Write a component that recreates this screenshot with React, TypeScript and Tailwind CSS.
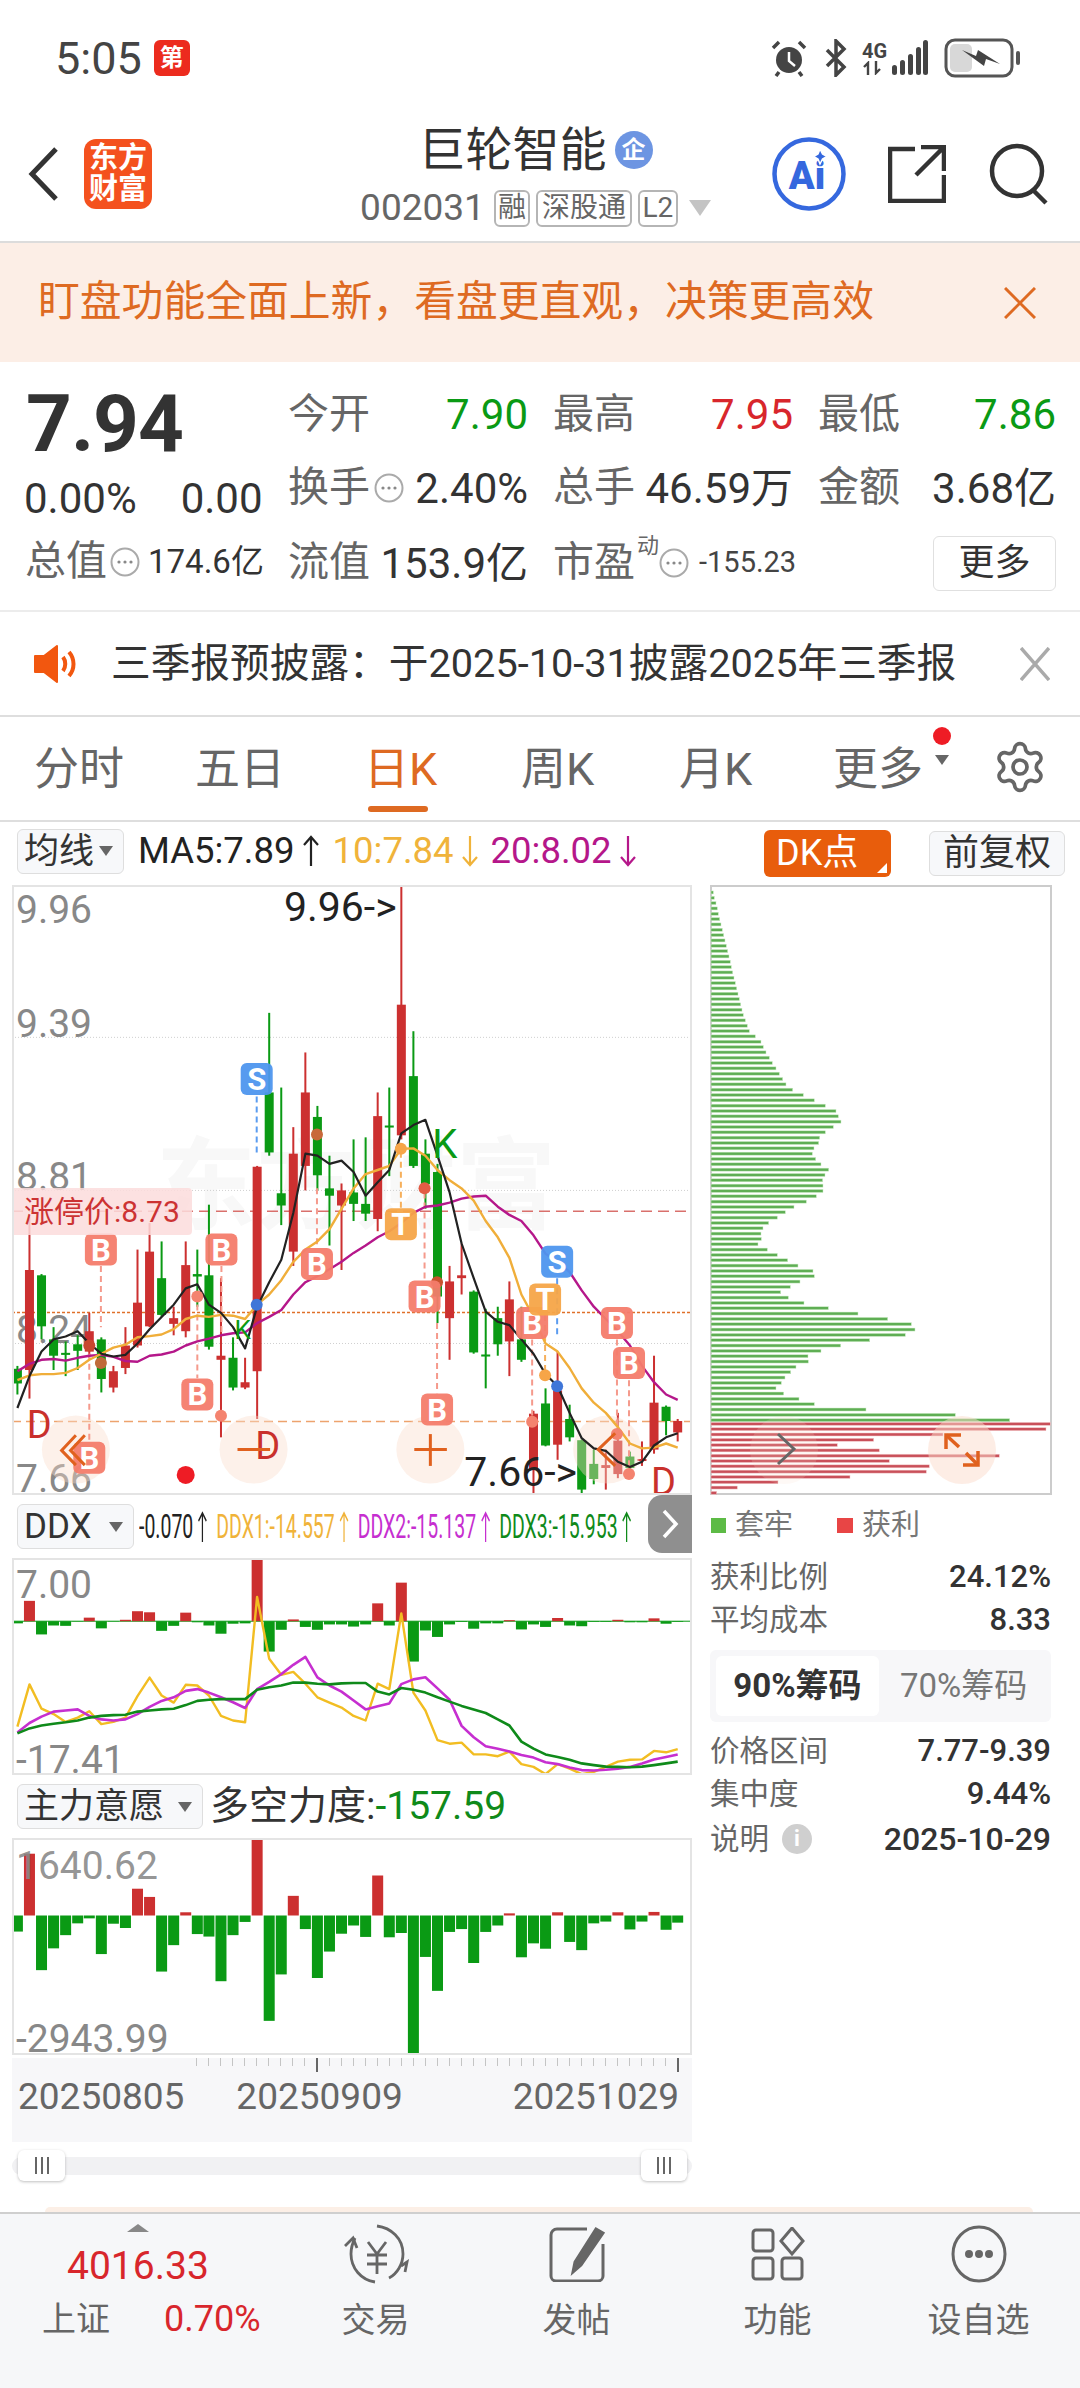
import React from "react";
import { Settings } from "lucide-react";

const RED = "#cc3030";
const GREEN = "#0a9a14";
const XS = [39,66,93,120,147,174,200,227,254,281,308,335,362,389,416,442,468,495,522,549,576,603,630,657,684,711,738,765,792,819,846,872,899,926,953,980,1007,1034,1061,1088,1115,1141,1168,1195,1222,1249,1276,1303,1330,1357,1384,1411,1438,1465,1492,1518];
const X = (z: number) => z / 2.24 - 12;
const Y = (z: number) => z / 2.45 - 15;

// up/down, high, body top, body bottom, low
const K: [number, number, number, number, number][] = [
[0,1215,1222,1258,1285],[1,850,980,1225,1295],[0,990,993,1118,1150],[0,1120,1150,1190,1225],[0,1155,1183,1188,1240],[0,1140,1162,1178,1225],[1,1085,1130,1180,1195],[0,1145,1150,1247,1280],[1,1215,1228,1268,1280],[1,1120,1165,1220,1235],[1,930,1060,1165,1170],[1,865,935,1118,1120],[0,910,1000,1090,1095],[1,1070,1098,1112,1140],[1,910,968,1130,1145],[0,930,990,996,1070],[0,820,993,1168,1175],[1,1000,1190,1200,1390],[0,1145,1195,1268,1275],[1,1195,1255,1268,1272],[1,725,727,1228,1345],[0,350,545,692,700],[0,533,792,822,870],[1,630,695,935,970],[1,447,545,725,785],[0,578,605,748,785],[0,700,780,798,920],[1,768,785,822,980],[0,660,790,818,860],[0,655,818,842,860],[1,545,603,855,885],[0,533,626,631,750],[1,37,330,650,660],[0,395,505,725,730],[0,660,695,770,830],[0,720,740,1045,1110],[1,970,1008,1098,1200],[1,915,993,1000,1040],[0,1030,1033,1182,1185],[0,1075,1187,1192,1270],[0,1070,1098,1162,1190],[1,1008,1052,1155,1240],[0,1070,1150,1200,1205],[1,1325,1332,1468,1530],[0,1270,1307,1410,1412],[1,1180,1275,1408,1445],[0,1310,1345,1390,1400],[0,1395,1397,1518,1530],[0,1420,1455,1492,1505],[1,1420,1458,1465,1518],[1,1330,1398,1480,1490],[0,1425,1437,1465,1490],[1,1400,1443,1448,1460],[1,1190,1305,1420,1430],[0,1312,1315,1350,1385],[1,1345,1350,1378,1400]];

const pts = (ys: number[], fy: (n: number) => number, xs: number[] = XS) => ys.map((y, i) => `${X(xs[i]).toFixed(1)},${fy(y).toFixed(1)}`).join(" ");
const MA5 = [1318,1240,1180,1150,1143,1130,1160,1185,1192,1188,1160,1125,1095,1065,1025,1015,1065,1085,1120,1172,1070,1010,955,840,695,700,720,712,740,798,765,735,645,625,612,700,790,915,1000,1082,1107,1115,1150,1185,1235,1265,1330,1392,1417,1423,1450,1463,1450,1410,1390,1380];
const MA10 = [1250,1238,1235,1235,1232,1220,1200,1185,1170,1163,1145,1142,1138,1125,1100,1092,1095,1090,1092,1100,1065,1040,1005,960,930,910,880,830,780,745,735,725,683,682,700,735,760,780,810,860,900,950,1040,1095,1160,1180,1220,1270,1305,1330,1365,1405,1417,1415,1405,1415];
const MA20 = [1228,1210,1200,1198,1202,1195,1190,1188,1193,1203,1205,1190,1187,1180,1165,1155,1148,1140,1135,1133,1110,1095,1078,1040,1010,995,978,960,938,920,900,885,865,840,825,822,815,805,800,798,825,845,860,895,940,960,985,1030,1070,1100,1130,1165,1215,1255,1285,1298];

const CHIP: number[] = [69,72,77,81,84,88,92,96,100,104,108,112,116,120,123,127,131,135,139,143,147,151,155,159,165,171,177,195,212,219,227,237,246,257,267,277,287,307,339,372,405,437,444,452,429,405,388,385,371,366,376,392,415,404,397,398,398,378,348,311,285,261,235,218,212,213,203,231,261,292,323,368,372,329,300,271,294,341,414,503,592,663,674,645,538,451,392,353,354,317,301,284,273,257,280,326,372,527,795,958];
const CHIPR: number[] = [1080,1067,758,550,441,567,927,597,717,708,479,263,141,79];

const DDXB = [346,283,377,352,353,341,330,360,341,336,312,315,367,353,316,343,352,375,347,346,165,425,364,335,356,364,349,349,355,349,290,352,232,453,366,384,349,342,361,346,346,337,363,349,356,331,352,354,342,342,336,343,343,332,347,342];
const DY = [635,517,585,600,622,610,592,628,622,610,550,498,548,568,518,520,548,605,618,623,272,445,490,482,515,553,568,582,605,618,515,530,318,540,590,673,683,680,713,713,718,705,740,748,768,740,753,768,762,748,733,728,727,703,707,698];
const DM = [652,625,607,593,590,587,605,615,618,615,600,580,563,553,535,530,540,553,567,583,530,510,488,462,440,497,520,537,562,587,578,570,516,503,497,528,560,633,665,690,697,705,715,722,735,740,750,757,758,756,753,748,738,727,720,713];
const DG = [654,640,632,627,623,618,610,605,603,602,593,590,587,585,575,563,560,558,558,558,532,525,520,512,512,515,517,514,513,513,537,545,527,532,540,553,565,577,587,597,615,632,677,697,713,720,728,738,743,747,748,749,747,743,738,733];
const MAIN = [1210,992,1318,1257,1220,1187,1173,1273,1188,1200,1090,1113,1322,1248,1156,1217,1224,1349,1220,1183,950,1460,1330,1110,1203,1340,1266,1216,1193,1225,1053,1226,1214,1552,1281,1376,1211,1203,1298,1211,1193,1159,1282,1243,1258,1156,1239,1262,1187,1182,1156,1204,1182,1155,1205,1185];

function Marker({ x, y, t }: { x: number; y: number; t: string }) {
  const fill = t === "B" ? "#f47c6b" : t === "S" ? "#4e96ee" : "#f6a548";
  const cx = X(x), cy = Y(y);
  return (
    <g>
      <rect x={cx - 16} y={cy - 16} width={32} height={32} rx={6} fill={fill} opacity={0.95} />
      <text x={cx} y={cy + 11} textAnchor="middle" fontSize={31} fontWeight={700} fill="#fff">{t}</text>
    </g>
  );
}

function VDash({ x, a, b, c }: { x: number; a: number; b: number; c: string }) {
  return <line x1={X(x)} x2={X(x)} y1={Y(a)} y2={Y(b)} stroke={c} strokeWidth={2} strokeDasharray="6 4" />;
}

function Main() {
  const grid = [410, 785, 1160];
  return (
    <div className="relative w-[680px] h-[610px] border-2 border-[#e4e4e4] overflow-hidden">
      <div className="absolute left-[142px] top-[250px] text-[100px] leading-[100px] font-bold text-[#f8f8f8] whitespace-nowrap">东方财富</div>
      <svg width={680} height={610} className="absolute -left-[2px] -top-[2px]">
        {grid.map((g) => <line key={g} x1={0} x2={680} y1={Y(g)} y2={Y(g)} stroke="#cfcfcf" strokeWidth={1} strokeDasharray="1 2" />)}
        {([["9.96",38],["9.39",152],["8.81",305],["8.24",458],["7.66",607]] as [string, number][]).map(([t, y]) => (
          <text key={t} x={4} y={y} fontSize={39} fill="#888">{t}</text>
        ))}
        <line x1={0} x2={680} y1={Y(836)} y2={Y(836)} stroke="#d9706c" strokeWidth={1.5} strokeDasharray="11 6" />
        <line x1={0} x2={680} y1={Y(1084)} y2={Y(1084)} stroke="#e0702a" strokeWidth={1.5} strokeDasharray="3 2" />
        <line x1={0} x2={680} y1={Y(1351)} y2={Y(1351)} stroke="#eda36e" strokeWidth={1.5} strokeDasharray="9 5" />
        {K.map(([u, h, t, b, l], i) => {
          const c = u ? RED : GREEN;
          return (
            <g key={i}>
              <rect x={X(XS[i]) - 1} y={Y(h)} width={2} height={(l - h) / 2.45} fill={c} />
              <rect x={X(XS[i]) - 4.5} y={Y(t)} width={9} height={Math.max((b - t) / 2.45, 2)} fill={c} />
            </g>
          );
        })}
        {[170, 568, 964, 1360].map((c) => <circle key={c} cx={X(c)} cy={Y(1420)} r={34} fill="#fbdccb" opacity={0.4} />)}
        <VDash x={226} a={970} b={1120} c="#f59a8c" />
        <VDash x={496} a={970} b={1140} c="#f59a8c" />
        <VDash x={710} a={780} b={925} c="#f59a8c" />
        <VDash x={951} a={790} b={1005} c="#f59a8c" />
        <VDash x={442} a={1040} b={1245} c="#f59a8c" />
        <VDash x={979} a={1110} b={1282} c="#f59a8c" />
        <VDash x={1192} a={1150} b={1350} c="#f59a8c" />
        <VDash x={1382} a={1150} b={1385} c="#f59a8c" />
        <VDash x={1409} a={1250} b={1480} c="#f59a8c" />
        <VDash x={200} a={1185} b={1400} c="#f59a8c" />
        <VDash x={575} a={555} b={695} c="#5b9cf0" />
        <VDash x={1248} a={1000} b={1145} c="#5b9cf0" />
        <VDash x={898} a={690} b={828} c="#f6b05c" />
        <VDash x={1221} a={1090} b={1240} c="#f6b05c" />
        <polyline points={pts(MA20, Y)} fill="none" stroke="#b5178a" strokeWidth={2.4} strokeLinejoin="round" />
        <polyline points={pts(MA10, Y)} fill="none" stroke="#f0ae3a" strokeWidth={2.4} strokeLinejoin="round" />
        <polyline points={pts(MA5, Y)} fill="none" stroke="#222" strokeWidth={2.2} strokeLinejoin="round" />
        {([[442,1045,"#f4836f"],[495,1337,"#f4836f"],[1192,1352,"#f4836f"],[1382,1382,"#f4836f"],[1409,1480,"#f4836f"],[200,1165,"#c9472f"],[226,1208,"#c06a3a"],[710,648,"#c8683a"],[951,780,"#e25c45"],[979,1010,"#c8542e"],[898,683,"#f6a548"],[1221,1238,"#f6a548"],[575,1065,"#3f76d8"],[1248,1265,"#3f76d8"]] as [number, number, string][]).map(([x, y, c]) => (
          <circle key={`${x}-${y}`} cx={X(x)} cy={Y(y)} r={6} fill={c} />
        ))}
        <circle cx={X(416)} cy={Y(1482)} r={9} fill="#ee1c25" />
        {([[226,930,"B"],[496,930,"B"],[710,965,"B"],[951,1045,"B"],[442,1285,"B"],[979,1322,"B"],[1192,1110,"B"],[1382,1110,"B"],[1409,1208,"B"],[200,1440,"B"],[575,512,"S"],[1248,960,"S"],[898,868,"T"],[1221,1052,"T"]] as [number, number, string][]).map(([x, y, t]) => (
          <Marker key={`${x}-${y}`} x={x} y={y} t={t} />
        ))}
        <text x={X(968)} y={Y(705)} fontSize={40} fill={GREEN}>K</text>
        <text x={X(525)} y={Y(1150)} fontSize={26} fill={GREEN}>K</text>
        <text x={X(60)} y={Y(1392)} fontSize={38} fill="#c9302c">D</text>
        <text x={X(572)} y={Y(1442)} fontSize={38} fill="#c9302c">D</text>
        <text x={X(1458)} y={Y(1532)} fontSize={38} fill="#c9302c">D</text>
        <text x={X(636)} y={Y(124)} fontSize={41} fill="#222">9.96-&gt;</text>
        <text x={X(1040)} y={Y(1510)} fontSize={41} fill="#222">7.66-&gt;</text>
        <g stroke="#e0611e" strokeWidth={3} fill="none">
          <polyline points={`${X(170)},${Y(1385)} ${X(138)},${Y(1422)} ${X(170)},${Y(1458)}`} />
          <polyline points={`${X(190)},${Y(1385)} ${X(158)},${Y(1422)} ${X(190)},${Y(1458)}`} />
          <line x1={X(532)} x2={X(605)} y1={Y(1420)} y2={Y(1420)} />
          <line x1={X(928)} x2={X(1001)} y1={Y(1420)} y2={Y(1420)} />
          <line x1={X(964)} x2={X(964)} y1={Y(1382)} y2={Y(1460)} />
          <polyline points={`${X(1378)},${Y(1380)} ${X(1340)},${Y(1420)} ${X(1378)},${Y(1460)}`} />
        </g>
      </svg>
      <div className="absolute -left-[2px] top-[301px] w-[180px] h-[47px] bg-[#fbdcdc]/85 rounded-r-sm flex items-center pl-[12px] text-[30px] text-[#cc3333] whitespace-nowrap">涨停价:8.73</div>
    </div>
  );
}

function Chip() {
  return (
    <div className="relative w-[342px] h-[610px] border-2 border-[#cccccc]">
      <svg width={342} height={610} className="absolute -left-[2px] -top-[2px]">
        {CHIP.map((e, i) => {
          const y = 55 + i * 13.06;
          return <rect key={i} x={1} y={y / 2.45 - 16.5} width={(e - 62) / 3} height={3} fill="#5fae54" stroke="#cdeec8" strokeWidth={0.5} />;
        })}
        {CHIPR.map((e, i) => {
          const y = 1357 + i * 13;
          return <rect key={i} x={1} y={y / 2.45 - 16.5} width={(e - 62) / 3} height={3} fill="#c9505a" stroke="#f5d0d0" strokeWidth={0.5} />;
        })}
        <circle cx={74} cy={565} r={34} fill="#fbdccb" opacity={0.18} />
        <circle cx={252} cy={565} r={34} fill="#fbdccb" opacity={0.5} />
        <polyline points="68,549 84,564 68,579" fill="none" stroke="#666" strokeWidth={3} />
        <g stroke="#e0611e" strokeWidth={3.5} fill="none">
          <polyline points="236,564 236,550 251,550" />
          <line x1={236} y1={550} x2={249} y2={562} />
          <polyline points="253,580 268,580 268,566" />
          <line x1={256} y1={568} x2={268} y2={580} />
        </g>
      </svg>
    </div>
  );
}

function Ddx() {
  const fy = (z: number) => (z - 163) / 2.8;
  return (
    <div className="relative w-[680px] h-[217px] border-2 border-[#e4e4e4] overflow-hidden">
      <svg width={680} height={217} className="absolute -left-[2px] -top-[2px]">
        <text x={4} y={40} fontSize={39} fill="#888">7.00</text>
        <text x={4} y={215} fontSize={39} fill="#888">-17.41</text>
        <line x1={0} x2={680} y1={fy(340)} y2={fy(340)} stroke={GREEN} strokeWidth={1} />
        {DDXB.map((v, i) => {
          const up = v < 340;
          const t = up ? v : 340, b = up ? 340 : v;
          return <rect key={i} x={X(XS[i]) - 5.5} y={fy(t)} width={11} height={(b - t) / 2.8} fill={up ? RED : GREEN} />;
        })}
        <polyline points={pts(DY, fy)} fill="none" stroke="#f2bd22" strokeWidth={2.4} strokeLinejoin="round" />
        <polyline points={pts(DM, fy)} fill="none" stroke="#c62fd0" strokeWidth={2.6} strokeLinejoin="round" />
        <polyline points={pts(DG, fy)} fill="none" stroke="#0f8a1a" strokeWidth={2.6} strokeLinejoin="round" />
      </svg>
    </div>
  );
}

function MainPower() {
  const fy = (z: number) => (z - 948) / 2.8;
  return (
    <div className="relative w-[680px] h-[217px] border-2 border-[#e4e4e4] overflow-hidden">
      <svg width={680} height={217} className="absolute -left-[2px] -top-[2px]">
        {MAIN.map((v, i) => {
          const up = v < 1165;
          const t = up ? v : 1165, b = up ? 1165 : v;
          return <rect key={i} x={X(XS[i]) - 5.5} y={fy(t)} width={11} height={(b - t) / 2.8} fill={up ? RED : GREEN} />;
        })}
        <text x={4} y={41} fontSize={39} fill="#888" fillOpacity={0.9}>1640.62</text>
        <text x={4} y={214} fontSize={39} fill="#888">-2943.99</text>
      </svg>
    </div>
  );
}

function Tri({ className }: { className: string }) {
  return <span className={`inline-block w-0 h-0 border-l-[7px] border-r-[7px] border-t-[10px] border-l-transparent border-r-transparent ${className}`} />;
}

function Select({ label, w }: { label: string; w: string }) {
  return (
    <div className={`${w} h-[45px] rounded-md border border-[#dedede] bg-[#f7f8fa] flex items-center justify-between pl-[6px] pr-[10px] text-[35px] leading-[45px] text-[#333] shrink-0`}>
      <span>{label}</span>
      <Tri className="border-t-[#666]" />
    </div>
  );
}

function Arrow({ up, c, h = 32, w = 18 }: { up: boolean; c: string; h?: number; w?: number }) {
  return (
    <svg width={w} height={h} viewBox="0 0 18 32" preserveAspectRatio="none" className="shrink-0" fill="none" stroke={c} strokeWidth={2.2}>
      {up ? <path d="M9 31V2M2 10l7-8 7 8" /> : <path d="M9 1v29M2 22l7 8 7-8" />}
    </svg>
  );
}

function Dots({ s = 30 }: { s?: number }) {
  return (
    <svg width={s} height={s} viewBox="0 0 30 30" className="shrink-0">
      <circle cx="15" cy="15" r="13.5" fill="none" stroke="#aaa" strokeWidth="2" />
      <circle cx="9" cy="15" r="1.6" fill="#888" /><circle cx="15" cy="15" r="1.6" fill="#888" /><circle cx="21" cy="15" r="1.6" fill="#888" />
    </svg>
  );
}

function Cell({ l, v, c = "#333", dots }: { l: string; v: string; c?: string; dots?: boolean }) {
  return (
    <div className="flex items-center justify-between text-[42px] whitespace-nowrap">
      <div className="flex items-center gap-[4px] text-[#666] text-[41px]"><span>{l}</span>{dots && <Dots />}</div>
      <span style={{ color: c }}>{v}</span>
    </div>
  );
}

function Stat({ l, v }: { l: string; v: string }) {
  return (
    <div className="flex justify-between h-[43px] items-center whitespace-nowrap text-[29.5px]">
      <span className="text-[#666]">{l}</span>
      <span className="font-medium text-[#333] text-[31px]">{v}</span>
    </div>
  );
}

function Tag({ t, w }: { t: string; w: string }) {
  return <span className={`${w} h-[37px] border-2 border-[#b5b5b5] rounded-md flex items-center justify-center text-[28px] leading-none text-[#666] shrink-0`}>{t}</span>;
}

function NavItem({ icon, t }: { icon: React.ReactNode; t: string }) {
  return (
    <div className="w-[201px] flex flex-col items-center">
      <div className="h-[60px] flex items-center justify-center">{icon}</div>
      <div className="mt-[16px] text-[34px] leading-[40px] text-[#666]">{t}</div>
    </div>
  );
}

function Grip({ cls }: { cls: string }) {
  return (
    <div className={`absolute -top-[7px] h-[31px] bg-white rounded-md shadow-[0_1px_3px_rgba(0,0,0,0.25)] flex items-center justify-center gap-[4px] ${cls}`}>
      <i className="block w-[2px] h-[17px] bg-[#666]" /><i className="block w-[2px] h-[17px] bg-[#666]" /><i className="block w-[2px] h-[17px] bg-[#666]" />
    </div>
  );
}

function DdxVal({ t, c }: { t: string; c: string }) {
  return (
    <span className="flex items-center gap-[7px] mr-[15px]" style={{ color: c }}>
      {t}<Arrow up c={c} w={17} />
    </span>
  );
}

export default function App() {
  const ticks = Array.from({ length: 41 }, (_, i) => i);
  return (
    <div className="w-[1080px] h-[2388px] bg-white overflow-hidden flex flex-col font-[Roboto,'Noto_Sans_CJK_SC',sans-serif] text-[#333]">
      {/* status bar */}
      <div className="h-[100px] flex items-center justify-between pl-[55px] pr-[60px] pt-[16px] shrink-0">
        <div className="flex items-center gap-[12px]">
          <span className="text-[45px] leading-none text-[#444]">5:05</span>
          <span className="w-[36px] h-[36px] rounded-md bg-[#ec2b1e] text-white text-[24px] leading-[36px] text-center font-bold">第</span>
        </div>
        <div className="flex items-center">
          <svg width="38" height="38" viewBox="0 0 38 38">
            <circle cx="19" cy="21" r="13" fill="#444" />
            <path d="M19 13v9l6 5" stroke="#fff" strokeWidth="2.5" fill="none" />
            <path d="M3 9l6-6M35 9l-6-6M9 33l-3 4M29 33l3 4" stroke="#444" strokeWidth="3.5" />
          </svg>
          <svg width="24" height="38" viewBox="0 0 24 38" className="ml-[16px]" fill="none" stroke="#444" strokeWidth="3.5">
            <path d="M3 11l17 17-8 8V2l8 8L3 27" />
          </svg>
          <div className="ml-[14px] w-[30px] flex flex-col items-start">
            <span className="text-[20px] leading-[20px] font-bold text-[#444]">4G</span>
            <svg width="22" height="14" viewBox="0 0 22 14" stroke="#444" strokeWidth="2.4" fill="none"><path d="M6 14V2L2 6M14 0v12l4-4" /></svg>
          </div>
          <svg width="38" height="38" viewBox="0 0 38 38" fill="#444" className="-ml-[2px]">
            <rect x="2" y="26" width="5" height="10" rx="2.5" /><rect x="10" y="21" width="5" height="15" rx="2.5" /><rect x="18" y="15" width="5" height="21" rx="2.5" /><rect x="26" y="8" width="5" height="28" rx="2.5" /><rect x="33" y="1" width="5" height="35" rx="2.5" />
          </svg>
          <svg width="76" height="40" viewBox="0 0 76 40" className="ml-[16px]">
            <rect x="2" y="2" width="66" height="36" rx="9" fill="#fff" stroke="#555" strokeWidth="3" />
            <rect x="6" y="6" width="22" height="28" rx="5" fill="#d8d8d8" />
            <path d="M18 12l14 6 2-6 22 14-14-5-2 7z" fill="#444" />
            <rect x="72" y="13" width="4" height="14" rx="2" fill="#555" />
          </svg>
        </div>
      </div>

      {/* header */}
      <div className="h-[143px] flex border-b-2 border-[#dcdcdc] relative shrink-0">
        <div className="w-[380px] flex items-center pl-[27px] gap-[25px] pt-[7px]">
          <svg width="32" height="56" viewBox="0 0 32 56" fill="none" stroke="#333" strokeWidth="5"><path d="M29 3L5 28l24 25" /></svg>
          <div className="w-[68px] h-[70px] bg-[#f4511e] rounded-[12px] text-white font-bold text-[29px] leading-[31px] text-center flex items-center justify-center">东方<br />财富</div>
        </div>
        <div className="flex-1 flex flex-col items-center -ml-[91px] pt-[25px] whitespace-nowrap">
          <div className="flex items-center gap-[8px] h-[50px] pl-[10px]">
            <span className="text-[47px] leading-[50px] text-[#333]">巨轮智能</span>
            <span className="w-[38px] h-[38px] rounded-full bg-[#6d95e2] text-white text-[24px] leading-[38px] text-center font-bold">企</span>
          </div>
          <div className="flex items-center h-[40px] mt-[13px] gap-[6px] pl-[10px] text-[37px] text-[#666]">
            <span className="mr-[3px]">002031</span>
            <Tag t="融" w="w-[36px]" /><Tag t="深股通" w="w-[96px]" /><Tag t="L2" w="w-[40px]" />
            <Tri className="ml-[5px] border-l-[11px] border-r-[11px] border-t-[16px] border-t-[#c4c4c4]" />
          </div>
        </div>
        <div className="flex items-center gap-[42px] pr-[30px] pt-[7px]">
          <svg width="74" height="74" viewBox="0 0 74 74" className="shrink-0">
            <circle cx="37" cy="37" r="34.5" fill="#fff" stroke="#3568de" strokeWidth="4.5" />
            <text x="35" y="52" textAnchor="middle" fontSize="38" fontWeight="900" fill="#3568de" fontFamily="Roboto, sans-serif">Ai</text>
            <path d="M48 12l2.5 5 4.5 2.5-4.5 2.5-2.5 5-2-5-4.5-2.5 4.5-2.5z" fill="#3568de" stroke="#fff" strokeWidth="1.5" />
          </svg>
          <svg width="58" height="58" viewBox="0 0 58 58" fill="none" stroke="#333" strokeWidth="4.5" className="shrink-0">
            <path d="M27 4H2v52h54V30M56 26V2H33M56 2L28 30" />
          </svg>
          <svg width="62" height="62" viewBox="0 0 62 62" fill="none" stroke="#333" strokeWidth="4.5" className="shrink-0">
            <circle cx="29" cy="28" r="25" /><path d="M45 47l13 13" />
          </svg>
        </div>
      </div>

      {/* banner */}
      <div className="h-[119px] bg-[#fceee6] flex items-center justify-between pl-[38px] pr-[44px] text-[#de6a22] shrink-0">
        <span className="text-[41.8px] whitespace-nowrap">盯盘功能全面上新，看盘更直观，决策更高效</span>
        <svg width="32" height="32" viewBox="0 0 32 32" stroke="#de6a22" strokeWidth="3" className="shrink-0"><path d="M1 1l30 30M31 1L1 31" /></svg>
      </div>

      {/* quote */}
      <div className="h-[250px] flex border-b-2 border-[#ececec] pt-[16px] shrink-0">
        <div className="w-[288px] pl-[25px] shrink-0 whitespace-nowrap">
          <div className="text-[80px] leading-[80px] font-bold tracking-[-1px] h-[80px] mt-[6px] pl-[1px]">7.94</div>
          <div className="flex gap-[44px] text-[42px] leading-[50px] mt-[10px] -ml-[1px] text-[#333]"><span>0.00%</span><span>0.00</span></div>
          <div className="flex items-center mt-[8px] h-[60px] text-[41px] text-[#666]">
            <span>总值</span><span className="ml-[3px]"><Dots /></span><span className="ml-[8px] text-[33px] text-[#333]">174.6亿</span>
          </div>
        </div>
        <div className="flex-1 pr-[25px] grid grid-cols-[240px_240px_238px] gap-x-[25px] grid-rows-[73px_74px_76px]">
          <Cell l="今开" v="7.90" c={GREEN} />
          <Cell l="最高" v="7.95" c="#d8262c" />
          <Cell l="最低" v="7.86" c={GREEN} />
          <Cell l="换手" v="2.40%" dots />
          <Cell l="总手" v="46.59万" />
          <Cell l="金额" v="3.68亿" />
          <Cell l="流值" v="153.9亿" />
          <div className="flex items-center whitespace-nowrap">
            <span className="text-[41px] text-[#666]">市盈</span>
            <span className="text-[22px] text-[#666] self-start mt-[4px] ml-[2px]">动</span>
            <Dots />
            <span className="ml-[10px] text-[29px] text-[#444]">-155.23</span>
          </div>
          <div className="flex items-center justify-end">
            <div className="w-[123px] h-[55px] border border-[#e0e0e0] rounded-md flex items-center justify-center text-[36px] text-[#333]">更多</div>
          </div>
        </div>
      </div>

      {/* notice */}
      <div className="h-[105px] flex items-center pl-[33px] pr-[30px] border-b-2 border-[#dedede] shrink-0">
        <svg width="45" height="38" viewBox="0 0 45 38" className="shrink-0">
          <path d="M2 11h9L24 1v36L11 27H2z" fill="#f2570f" stroke="#f2570f" strokeWidth="2" strokeLinejoin="round" />
          <path d="M30 12c3 4 3 10 0 14M36 7c6 7 6 17 0 24" fill="none" stroke="#f2570f" strokeWidth="4" />
        </svg>
        <span className="ml-[33px] text-[39.7px] text-[#333] whitespace-nowrap flex-1">三季报预披露：于2025-10-31披露2025年三季报</span>
        <svg width="30" height="34" viewBox="0 0 30 34" stroke="#aaa" strokeWidth="3.5" className="shrink-0"><path d="M1 1l28 32M29 1L1 33" /></svg>
      </div>

      {/* tabs */}
      <div className="h-[105px] flex items-center border-b-2 border-[#dedede] relative text-[45px] text-[#666] shrink-0 whitespace-nowrap">
        <div className="w-[195px] pl-[34px] pt-[3px]">分时</div>
        <div className="w-[169px] pt-[3px]">五日</div>
        <div className="w-[157px] text-[#de6a22] h-full flex items-center relative pt-[3px]">
          日K
          <span className="absolute left-[4px] bottom-[8px] w-[60px] h-[6px] rounded-full bg-[#de6a22]" />
        </div>
        <div className="w-[158px] pt-[3px]">周K</div>
        <div className="w-[154px] pt-[3px]">月K</div>
        <div className="flex items-start relative pt-[3px]">
          <span>更多</span>
          <span className="absolute -right-[28px] -top-[6px] w-[18px] h-[18px] rounded-full bg-[#ee1c25]" />
          <Tri className="absolute -right-[26px] top-[22px] border-t-[#666]" />
        </div>
        <div className="absolute right-[32px] top-[22px]"><Settings size={56} strokeWidth={1.6} color="#666" /></div>
      </div>

      {/* chart area */}
      <div className="relative flex-1 flex">
        <div className="w-[704px] pl-[12px] shrink-0">
          <div className="h-[63px] flex items-center pl-[5px] whitespace-nowrap text-[36.5px] pb-[5px]">
            <Select label="均线" w="w-[107px]" />
            <span className="ml-[14px] text-[#222]">MA5:7.89</span>
            <span className="ml-[7px]"><Arrow up c="#222" /></span>
            <span className="ml-[13px] text-[#f0b33a]">10:7.84</span>
            <span className="ml-[7px]"><Arrow up={false} c="#f0b33a" /></span>
            <span className="ml-[12px] text-[#b5178a]">20:8.02</span>
            <span className="ml-[7px]"><Arrow up={false} c="#b5178a" /></span>
          </div>
          <Main />
          <div className="h-[63px] flex items-center pl-[5px] relative">
            <Select label="DDX" w="w-[117px]" />
            <div className="w-[490px] ml-[5px]">
              <div className="w-[830px] origin-left scale-x-[0.59] flex items-center text-[33px] whitespace-nowrap">
                <DdxVal t="-0.070" c="#222" />
                <DdxVal t="DDX1:-14.557" c="#f0b33a" />
                <DdxVal t="DDX2:-15.137" c="#c62fd0" />
                <DdxVal t="DDX3:-15.953" c="#0f8a1a" />
              </div>
            </div>
            <div className="absolute left-[636px] top-0 w-[44px] h-[58px] bg-[#8f8f8f] rounded-l-[14px] flex items-center justify-center">
              <svg width="18" height="30" viewBox="0 0 18 30" fill="none" stroke="#fff" strokeWidth="3.5"><path d="M3 2l12 13L3 28" /></svg>
            </div>
          </div>
          <Ddx />
          <div className="h-[63px] flex items-center pl-[5px] whitespace-nowrap">
            <Select label="主力意愿" w="w-[186px]" />
            <span className="ml-[7px] text-[39px] text-[#333]">多空力度:</span>
            <span className="text-[39px] text-[#0f8a1a]">-157.59</span>
          </div>
          <MainPower />
          <div className="mt-[3px] w-[680px] h-[84px] bg-[#f7f7f9] relative">
            <div className="h-[14px] flex items-start">
              {ticks.map((i) => <span key={i} className={`block shrink-0 ${i === 10 || i === 40 ? "h-[14px] bg-[#666] w-[2px]" : "h-[8px] bg-[#c4c4c4] w-[1px]"} ${i === 0 ? "ml-[184px]" : "ml-[11px]"}`} />)}
            </div>
            <div className="flex pl-[6px] text-[37px] leading-[40px] mt-[5px] text-[#666]">
              <span>20250805</span><span className="ml-[52px]">20250909</span><span className="ml-[110px]">20251029</span>
            </div>
          </div>
          <div className="mt-[15px] w-[680px] h-[18px] rounded-full bg-[#f1f1f3] relative">
            <Grip cls="left-[6px] w-[47px]" />
            <Grip cls="left-[629px] w-[46px]" />
          </div>
        </div>
        <div className="w-[341px] ml-[6px] shrink-0">
          <div className="h-[63px] flex items-start justify-between pt-[8px] pb-[5px] whitespace-nowrap">
            <div className="ml-[54px] w-[127px] h-[47px] bg-[#e85d0c] rounded-md text-white text-[36px] leading-[47px] pl-[12px] relative">
              DK点
              <span className="absolute right-[4px] bottom-[4px] w-0 h-0 border-l-[10px] border-b-[10px] border-l-transparent border-b-white" />
            </div>
            <div className="w-[136px] h-[45px] mt-[1px] -mr-[14px] bg-[#f7f8fa] border border-[#dedede] rounded-md text-[36px] leading-[43px] text-center">前复权</div>
          </div>
          <Chip />
          <div className="h-[61px] flex items-center text-[29px] text-[#777] whitespace-nowrap pl-[1px]">
            <span className="w-[15px] h-[15px] bg-[#5dbb46]" />
            <span className="ml-[9px]">套牢</span>
            <span className="ml-[44px] w-[16px] h-[15px] bg-[#e84545]" />
            <span className="ml-[9px]">获利</span>
          </div>
          <Stat l="获利比例" v="24.12%" />
          <Stat l="平均成本" v="8.33" />
          <div className="mt-[8px] h-[72px] bg-[#f7f7f9] rounded-md p-[6px] flex items-center text-[33px] whitespace-nowrap">
            <div className="w-[163px] h-[60px] bg-white rounded-md flex items-center justify-center font-bold text-[#333]">90%筹码</div>
            <div className="ml-[21px] text-[#777]">70%筹码</div>
          </div>
          <div className="mt-[8px]">
            <Stat l="价格区间" v="7.77-9.39" />
            <Stat l="集中度" v="9.44%" />
            <div className="flex justify-between h-[46px] items-center text-[29.5px] whitespace-nowrap">
              <span className="flex items-center gap-[13px] text-[#666]">说明
                <span className="w-[30px] h-[30px] rounded-full bg-[#cfcfcf] text-white text-[22px] font-bold leading-[30px] text-center">i</span>
              </span>
              <span className="font-medium text-[#333] text-[32px]">2025-10-29</span>
            </div>
          </div>
        </div>
        <div className="absolute left-[45px] bottom-0 w-[988px] h-[5px] bg-[#fcefe6] rounded-t-[14px]" />
      </div>

      {/* bottom nav */}
      <div className="h-[176px] shrink-0 bg-[#f6f7f9] border-t-2 border-[#cfcfcf] flex pt-[10px] whitespace-nowrap relative">
        <div className="w-[275px] flex flex-col shrink-0">
          <span className="ml-[127px] w-0 h-0 border-l-[11px] border-r-[11px] border-b-[8px] border-l-transparent border-r-transparent border-b-[#888]" />
          <div className="text-[39px] leading-[40px] mt-[14px] text-[#d8262c] pl-[67px]">4016.33</div>
          <div className="flex items-center mt-[6px] pl-[42px]">
            <span className="text-[34px] text-[#666]">上证</span>
            <span className="ml-[54px] text-[36px] text-[#d8262c]">0.70%</span>
          </div>
        </div>
        <div className="flex">
          <NavItem t="交易" icon={
            <svg width="66" height="60" viewBox="0 0 66 60" fill="none" stroke="#666" strokeWidth="2.8">
              <path d="M34 2c14 2 26 12 26 28 0 10-6 20-14 24M32 58C18 56 8 44 8 30c0-8 2-12 4-16" />
              <path d="M2 22l8-8 4 10M58 42l6-4-2 10" />
              <path d="M25 18l9 12 9-12M24 31h20M24 40h20M34 30v20" />
            </svg>} />
          <NavItem t="发帖" icon={
            <svg width="56" height="56" viewBox="0 0 56 56" fill="none" stroke="#666" strokeWidth="3">
              <path d="M38 3H8a6 6 0 0 0-6 6v41a5 5 0 0 0 5 5h42a5 5 0 0 0 5-5V18" />
              <path d="M26 36L47 3l7 4-22 32-8 7z" fill="#666" />
            </svg>} />
          <NavItem t="功能" icon={
            <svg width="54" height="54" viewBox="0 0 54 54" fill="none" stroke="#666" strokeWidth="3">
              <rect x="2" y="3" width="20" height="21" rx="3" />
              <path d="M41 1l11 13-11 13-11-13z" />
              <rect x="2" y="31" width="20" height="21" rx="3" />
              <rect x="31" y="31" width="20" height="21" rx="3" />
            </svg>} />
          <NavItem t="设自选" icon={
            <svg width="56" height="58" viewBox="0 0 56 58" fill="none" stroke="#666" strokeWidth="3">
              <ellipse cx="28" cy="29" rx="26" ry="27" />
              <circle cx="18" cy="29" r="2.5" fill="#666" /><circle cx="28" cy="29" r="2.5" fill="#666" /><circle cx="38" cy="29" r="2.5" fill="#666" />
            </svg>} />
        </div>
      </div>
    </div>
  );
}
